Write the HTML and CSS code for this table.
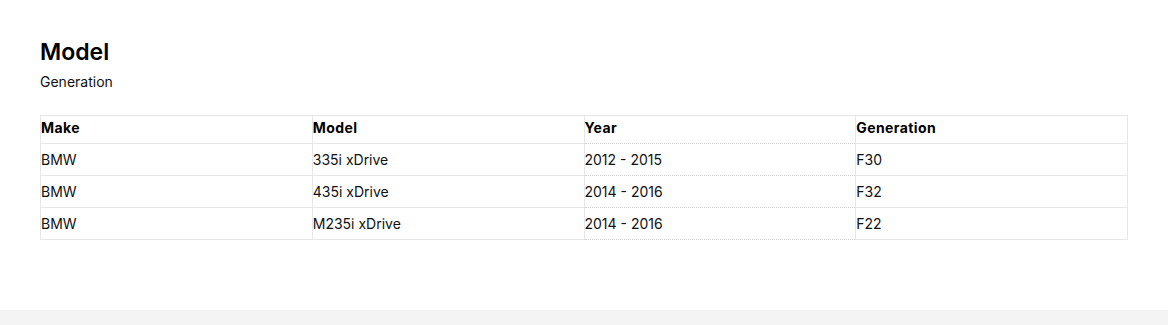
FILE: index.html
```html
<!DOCTYPE html>
<html>
<head>
<meta charset="utf-8">
<link rel="stylesheet" href="styles.css">
</head>
<body>
<main class="page">
  <h1 class="title">Model</h1>
  <p class="subtitle">Generation</p>
  <table class="grid">
    <thead>
      <tr><th>Make</th><th>Model</th><th class="year">Year</th><th>Generation</th></tr>
    </thead>
    <tbody>
      <tr><td>BMW</td><td>335i xDrive</td><td class="year">2012 - 2015</td><td>F30</td></tr>
      <tr><td>BMW</td><td>435i xDrive</td><td class="year">2014 - 2016</td><td>F32</td></tr>
      <tr><td>BMW</td><td>M235i xDrive</td><td class="year">2014 - 2016</td><td>F22</td></tr>
    </tbody>
  </table>
</main>
<footer class="footer"></footer>
</body>
</html>
```
FILE: styles.css
```css
html, body { margin: 0; padding: 0; background: #fff; }
body { font-family: Inter, "Noto Sans", sans-serif; color: #111; }
.page { padding: 38px 40px 0; height: 272px; box-sizing: border-box; }
.title { margin: 0; font-size: 23px; font-weight: 600; line-height: 28px; color: #000; }
.subtitle { margin: 8px 0 0; font-size: 14px; line-height: 16px; color: #111; }
.grid { margin-top: 25px; width: 1088px; border-collapse: collapse; table-layout: fixed; font-size: 14px; }
.grid th, .grid td { border: 1px solid #e6e6e6; padding: 0; text-align: left; line-height: 17px; }
.grid th { height: 23px; padding-bottom: 4px; font-weight: 700; letter-spacing: 0.4px; color: #000; }
.grid td { height: 31px; color: #111; }
.grid .year { border-left: 1px dotted #bdbdbd; border-bottom: 1px dotted #cfcfcf; }
.grid td.year { border-top: 1px dotted #cfcfcf; }
.footer { margin-top: 38px; height: 15px; background: #f4f4f4; }
```
